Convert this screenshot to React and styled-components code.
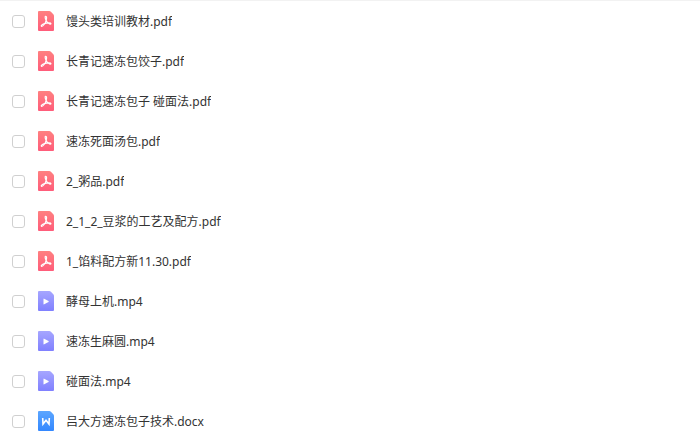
import React, { useState } from 'react';
import styled, { createGlobalStyle } from 'styled-components';

const files = [
  { id: 1, type: 'pdf', name: '馒头类培训教材.pdf' },
  { id: 2, type: 'pdf', name: '长青记速冻包饺子.pdf' },
  { id: 3, type: 'pdf', name: '长青记速冻包子 碰面法.pdf' },
  { id: 4, type: 'pdf', name: '速冻死面汤包.pdf' },
  { id: 5, type: 'pdf', name: '2_粥品.pdf' },
  { id: 6, type: 'pdf', name: '2_1_2_豆浆的工艺及配方.pdf' },
  { id: 7, type: 'pdf', name: '1_馅料配方新11.30.pdf' },
  { id: 8, type: 'video', name: '酵母上机.mp4' },
  { id: 9, type: 'video', name: '速冻生麻圆.mp4' },
  { id: 10, type: 'video', name: '碰面法.mp4' },
  { id: 11, type: 'doc', name: '吕大方速冻包子技术.docx' },
];

const gradients = {
  pdf: ['#ff8080', '#ff5c7a'],
  video: ['#a6a6ff', '#8080ff'],
  doc: ['#5ca6ff', '#3388ff'],
};

const glyphs = {
  pdf: (
    <path
      d="M7.5 5.4C8.9 5.2 8.7 7.4 8.1 9.6C7.3 12.2 5.2 15.2 3.7 15.3C2.5 15 3.9 13.4 6.5 12.6C9.2 11.8 13 11.6 13 12.8C12.4 13.8 9.5 12.2 8.3 9.8C7.5 8.2 6.6 5.8 7.5 5.4Z"
      fill="none"
      stroke="#fff"
      strokeWidth="1.2"
      strokeLinejoin="round"
    />
  ),
  video: <path d="M5.5 8.1Q5.5 7.4 6.2 7.7L10.5 10.1Q11 10.5 10.5 10.9L6.2 13.3Q5.5 13.6 5.5 12.9Z" fill="#fff" />,
  doc: <path d="M4.7 7L5 13L8 9.2L11 13L11.3 7" fill="none" stroke="#fff" strokeWidth="1.6" />,
};

const FileIcon = ({ type }) => {
  const [from, to] = gradients[type];
  const gradientId = `gradient-${type}`;

  return (
    <IconSvg viewBox="0 0 16 20" aria-hidden="true">
      <defs>
        <linearGradient id={gradientId} x1="0" y1="0" x2="0" y2="1">
          <stop offset="0" stopColor={from} />
          <stop offset="1" stopColor={to} />
        </linearGradient>
      </defs>
      <path
        d="M1 0H11.2Q12.2 0 12.9 0.7L15.3 3.3Q16 4 16 5V19Q16 20 15 20H1Q0 20 0 19V1Q0 0 1 0Z"
        fill={`url(#${gradientId})`}
      />
      {glyphs[type]}
    </IconSvg>
  );
};

const App = () => {
  const [selected, setSelected] = useState([]);

  const toggle = (id) => {
    setSelected(selected.includes(id) ? selected.filter((item) => item !== id) : [...selected, id]);
  };

  return (
    <>
      <GlobalStyle />
      <FileList>
        {files.map(({ id, type, name }) => (
          <FileRow key={id}>
            <Checkbox
              type="checkbox"
              id={`file-${id}`}
              checked={selected.includes(id)}
              onChange={() => toggle(id)}
            />
            <FileLabel htmlFor={`file-${id}`}>
              <FileIcon type={type} />
              <FileName>{name}</FileName>
            </FileLabel>
          </FileRow>
        ))}
      </FileList>
    </>
  );
};

const GlobalStyle = createGlobalStyle`
  body {
    margin: 0;
    background: #fff;
    color: #333;
    font-family: "Noto Sans", "Noto Sans CJK SC", sans-serif;
    font-size: 12px;
  }
`;

const FileList = styled.ul`
  margin: 0;
  padding: 0;
  list-style: none;
  border-top: 1px solid #f2f2f2;
`;

const FileRow = styled.li`
  display: flex;
  align-items: center;
  gap: 13px;
  height: 40px;
  padding: 0 12px;
`;

const Checkbox = styled.input`
  appearance: none;
  flex: none;
  box-sizing: border-box;
  width: 13px;
  height: 13px;
  margin: 0;
  border: 1px solid #d0d0d0;
  border-radius: 3px;
  background: #fff;

  &:checked {
    border-color: #3388ff;
    background: #3388ff;
  }
`;

const FileLabel = styled.label`
  display: flex;
  flex: 1;
  align-items: center;
  gap: 12px;
  min-width: 0;
`;

const IconSvg = styled.svg`
  flex: none;
  width: 16px;
  height: 20px;
`;

const FileName = styled.span`
  padding-top: 2px;
  line-height: 20px;
  white-space: nowrap;
  overflow: hidden;
  text-overflow: ellipsis;
`;

export default App;
